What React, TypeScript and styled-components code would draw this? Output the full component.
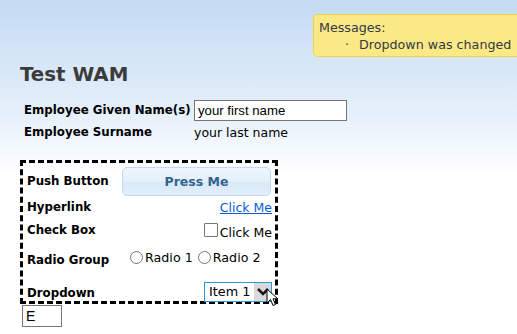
import styled, { createGlobalStyle } from 'styled-components';

const GlobalStyle = createGlobalStyle`
  html, body {
    margin: 0;
    padding: 0;
  }
  body {
    width: 517px;
    height: 334px;
    overflow: hidden;
    background: linear-gradient(to bottom, #c4dbf3 0px, #e4effa 110px, #ffffff 175px, #ffffff 100%);
    font-family: "DejaVu Sans", Verdana, sans-serif;
    color: #000;
  }
`;

const App = () => {
  return (
    <Page>
      <GlobalStyle />
      <MessageBar>
        <MessageBox>
          <MessageTitle>Messages:</MessageTitle>
          <MessageList>
            <li>Dropdown was changed</li>
          </MessageList>
        </MessageBox>
      </MessageBar>

      <Heading>Test WAM</Heading>

      <NameTable>
        <NameLabel>Employee Given Name(s)</NameLabel>
        <TextInput defaultValue="your first name" $width={153} />
        <NameLabel>Employee Surname</NameLabel>
        <PlainValue>your last name</PlainValue>
      </NameTable>

      <ControlsBox>
        <Row $height={30}>
          <RowLabel>Push Button</RowLabel>
          <Cell $align="stretch">
            <PushButton type="button">Press Me</PushButton>
          </Cell>
        </Row>
        <Row $height={22}>
          <RowLabel>Hyperlink</RowLabel>
          <Cell $align="end">
            <Link href="#">Click Me</Link>
          </Cell>
        </Row>
        <Row $height={24}>
          <RowLabel>Check Box</RowLabel>
          <Cell $align="end">
            <CheckLabel>
              <CheckBox />
              Click Me
            </CheckLabel>
          </Cell>
        </Row>
        <Row $height={36}>
          <RowLabel>Radio Group</RowLabel>
          <Cell $align="start">
            <RadioLabel>
              <RadioDot />
              Radio 1
            </RadioLabel>
            <RadioLabel>
              <RadioDot />
              Radio 2
            </RadioLabel>
          </Cell>
        </Row>
        <Row $height={23} $bottom>
          <RowLabel>Dropdown</RowLabel>
          <Cell $align="end">
            <Select>
              <SelectText>Item 1</SelectText>
              <SelectArrow>
                <svg width="14" height="12" viewBox="0 0 14 12">
                  <path d="M2 3 L7 8 L12 3" stroke="#1a1a1a" strokeWidth="2.6" fill="none" />
                </svg>
              </SelectArrow>
              <Cursor>
                <svg width="14" height="20" viewBox="0 0 14 20">
                  <path
                    d="M1 1 L1 15 L4.5 11.5 L7 17.5 L9.5 16.5 L7 10.8 L11.8 10.8 Z"
                    fill="#fff"
                    stroke="#000"
                    strokeWidth="1"
                    strokeLinejoin="round"
                  />
                </svg>
              </Cursor>
            </Select>
          </Cell>
        </Row>
      </ControlsBox>

      <SmallInput defaultValue="E" />
    </Page>
  );
};

export default App;

const Page = styled.div`
  position: relative;
  height: 334px;
  padding: 14px 0 0 20px;
  box-sizing: border-box;
`;

const MessageBar = styled.div`
  display: flex;
  justify-content: flex-end;
  margin-right: -16px;
`;

const MessageBox = styled.div`
  width: 220px;
  height: 43px;
  box-sizing: border-box;
  background: #fbe986;
  border: 1px solid #f3d24a;
  border-radius: 5px;
  padding: 5px 0 0 5px;
  font-family: "DejaVu Sans", Verdana, sans-serif;
  font-size: 12.7px;
  color: #333844;
  line-height: 16px;
`;

const MessageTitle = styled.div``;

const MessageList = styled.ul`
  margin: 1px 0 0 0;
  padding: 0 0 0 40px;
  list-style: none;
  white-space: nowrap;

  li::before {
    content: '·';
    display: inline-block;
    width: 14px;
    margin-left: -14px;
  }
`;

const Heading = styled.h1`
  margin: 6px 0 0 0;
  font-family: "DejaVu Sans", Verdana, sans-serif;
  font-size: 19.8px;
  font-weight: bold;
  color: #3b3b3b;
  line-height: 24px;
`;

const NameTable = styled.div`
  display: grid;
  grid-template-columns: 170px auto;
  justify-content: start;
  align-items: center;
  row-gap: 1px;
  margin: 13px 0 0 4px;
`;

const NameLabel = styled.div`
  font-size: 11.8px;
  font-weight: bold;
  height: 21px;
  line-height: 21px;
  white-space: nowrap;
`;

const TextInput = styled.input<{ $width: number }>`
  width: ${(p) => p.$width}px;
  height: 21px;
  box-sizing: border-box;
  border: 1px solid #767676;
  padding: 0 3px;
  font-family: "Liberation Sans", Arial, sans-serif;
  font-size: 13.2px;
  color: #000;
  background: #fff;
  outline: none;
`;

const PlainValue = styled.div`
  font-family: "DejaVu Sans", Verdana, sans-serif;
  font-size: 12.5px;
  height: 21px;
  line-height: 21px;
`;

const ControlsBox = styled.div`
  width: 258px;
  box-sizing: border-box;
  margin-top: 17px;
  border: 3px dashed #000;
  padding: 3px 3px 0 4px;
  display: flex;
  flex-direction: column;
`;

const Row = styled.div<{ $height: number; $bottom?: boolean }>`
  display: grid;
  grid-template-columns: 95px 1fr;
  align-items: ${(p) => (p.$bottom ? 'end' : 'center')};
  height: ${(p) => p.$height}px;
`;

const RowLabel = styled.div`
  font-size: 11.8px;
  font-weight: bold;
  line-height: 16px;
  white-space: nowrap;
`;

const Cell = styled.div<{ $align: 'stretch' | 'end' | 'start' }>`
  display: flex;
  align-items: center;
  justify-content: ${(p) =>
    p.$align === 'end' ? 'flex-end' : p.$align === 'start' ? 'flex-start' : 'stretch'};
  padding-left: ${(p) => (p.$align === 'start' ? '8px' : '0')};
  gap: ${(p) => (p.$align === 'start' ? '5px' : '2px')};
`;

const PushButton = styled.button`
  flex: 1;
  height: 29px;
  margin-right: 1px;
  border: 1px solid #c3d9ef;
  border-radius: 5px;
  background: linear-gradient(to bottom, #eef6fe 0%, #e3effb 50%, #d8e8f7 51%, #e2eefa 100%);
  font-family: "DejaVu Sans", Verdana, sans-serif;
  font-size: 12.5px;
  font-weight: bold;
  color: #34638f;
  cursor: pointer;
`;

const Link = styled.a`
  font-size: 12.5px;
  color: #0b5bd3;
  text-decoration: underline;
`;

const CheckLabel = styled.label`
  display: flex;
  align-items: center;
  gap: 1px;
  font-size: 12.5px;
  color: #000;
  padding-top: 4px;
`;

const CheckBox = styled.span`
  display: inline-block;
  width: 12px;
  height: 12px;
  border: 1px solid #767676;
  border-radius: 1px;
  background: #fff;
  margin-right: 1px;
  margin-top: -4px;
`;

const RadioLabel = styled.label`
  display: flex;
  align-items: center;
  gap: 2px;
  font-size: 12.7px;
  color: #000;
  margin-top: -6px;
`;

const RadioDot = styled.span`
  display: inline-block;
  width: 11px;
  height: 11px;
  border: 1px solid #767676;
  border-radius: 50%;
  background: #fff;
`;

const Select = styled.div`
  position: relative;
  display: flex;
  align-items: stretch;
  width: 68px;
  height: 20px;
  box-sizing: border-box;
  border: 1px solid #2a9ad8;
  background: #fff;
  margin-bottom: -1px;
`;

const SelectText = styled.span`
  flex: 1;
  padding-left: 4px;
  font-size: 12.8px;
  line-height: 18px;
  color: #000;
`;

const SelectArrow = styled.span`
  width: 17px;
  display: flex;
  align-items: center;
  justify-content: center;
  background: #d9d9d9;
`;

const Cursor = styled.span`
  position: absolute;
  left: 61px;
  top: 5px;
  line-height: 0;
`;

const SmallInput = styled.input`
  display: block;
  width: 40px;
  height: 22px;
  box-sizing: border-box;
  margin: 1px 0 0 2px;
  border: 1px solid #767676;
  padding: 0 3px;
  font-family: "Liberation Sans", Arial, sans-serif;
  font-size: 14px;
  background: #fff;
  outline: none;
`;
